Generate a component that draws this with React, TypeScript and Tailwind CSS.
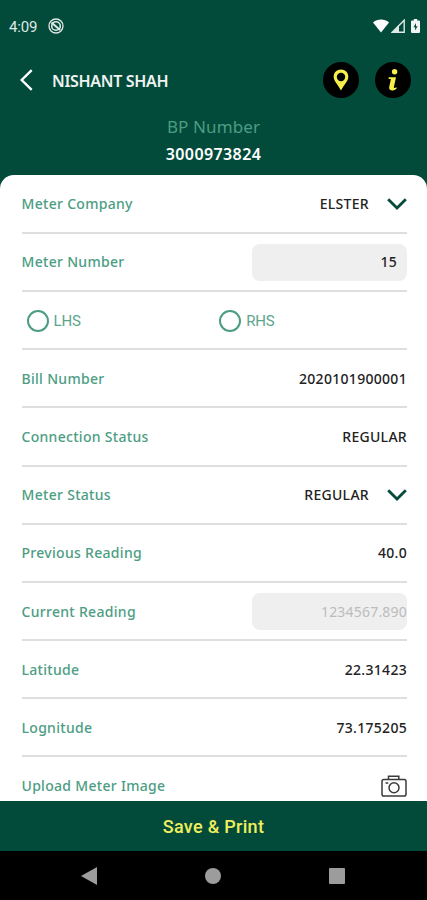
import type { ReactNode } from "react";

function StatusBar() {
  return (
    <div className="flex h-[52px] items-center justify-between pl-[9px] pr-[7px]">
      <div className="flex items-center gap-[11px] pt-px text-[#dfe8e4]">
        <span className="pt-px font-['Roboto',sans-serif] text-[15px] tracking-[-0.2px]">4:09</span>
        <svg viewBox="0 0 16 16" className="mb-px size-4" fill="none" stroke="currentColor">
          <circle cx="8" cy="8" r="7" strokeWidth="1.3" />
          <circle cx="8" cy="8" r="4.3" strokeWidth="1.6" />
          <path d="M3.5 4.5 12 12" strokeWidth="2" />
        </svg>
      </div>
      <div className="flex items-center text-white">
        <svg viewBox="0 0 16 14" className="h-[14px] w-4" fill="currentColor">
          <path d="M0 3.4C4.6-.4 11.4-.4 16 3.4L8 13.5Z" />
        </svg>
        <svg viewBox="0 0 14 14" className="ml-0.5 h-[14px] w-[14px]">
          <path d="M1.2 13.2 13.2 1.2V13.2Z" fill="none" stroke="#dfe8e4" strokeWidth="1.4" />
          <path d="M1 13.4 8 6.4V13.4Z" fill="#dfe8e4" />
        </svg>
        <svg viewBox="0 0 9 14" className="ml-1.5 h-[14px] w-[9px]">
          <path d="M2.8 0h3.4v1.5H8a1 1 0 0 1 1 1V13a1 1 0 0 1-1 1H1a1 1 0 0 1-1-1V2.5a1 1 0 0 1 1-1h1.8Z" fill="#f2f5f4" />
          <path d="M5 4 2.5 8.3h1.6v3.2l2.5-4.3H5Z" fill="#024b3a" />
        </svg>
      </div>
    </div>
  );
}

function Header() {
  return (
    <div className="flex h-14 items-center pl-5 pr-4">
      <svg viewBox="0 0 13 22" className="h-[22px] w-[13px]" fill="none" stroke="#fff" strokeWidth="2.4">
        <path d="M11.7 1.2 1.7 11l10 9.8" />
      </svg>
      <h1 className="ml-[19px] pt-px text-base font-semibold tracking-[-0.3px] text-[#eef3f1]">NISHANT SHAH</h1>
      <button type="button" aria-label="Location" className="ml-auto flex size-9 items-center justify-center rounded-full bg-black">
        <svg viewBox="0 0 16 22" className="h-[22px] w-4">
          <path
            d="M8 .5C3.8.5.7 3.6.7 7.7.7 12.3 5 15.5 8 21.5c3-6 7.3-9.2 7.3-13.8C15.3 3.6 12.2.5 8 .5Zm0 3.3a4.2 4.2 0 1 1 0 8.4 4.2 4.2 0 0 1 0-8.4Z"
            fill="#f5ef4b"
            fillRule="evenodd"
          />
        </svg>
      </button>
      <button type="button" aria-label="Info" className="ml-4 flex size-9 items-center justify-center rounded-full bg-black">
        <svg viewBox="0 0 10 22" className="h-[22px] w-[10px]" fill="#f5ef4b">
          <circle cx="6.6" cy="2.8" r="2.7" />
          <path d="M.7 8.2H8L6 17.6c-.2 1 0 1.5.6 1.5.6 0 1-.3 1.5-.8l.8.8C7.9 20.7 6.5 21.5 4.5 21.5c-2.6 0-3.7-1.4-3.3-3.4L2.9 10H.7Z" />
        </svg>
      </button>
    </div>
  );
}

function ChevronDown() {
  return (
    <svg viewBox="0 0 20 12" className="ml-[18px] h-3 w-5" fill="none" stroke="#064a3a" strokeWidth="2.8">
      <path d="M1.2 1.2 10 10l8.8-8.8" />
    </svg>
  );
}

function CameraIcon() {
  return (
    <svg viewBox="0 0 26 22" className="mb-px h-[22px] w-[26px]" fill="none" stroke="#3a3a3a" strokeWidth="1.5">
      <rect x="1" y="4.5" width="24" height="16.5" rx="1.8" />
      <path d="M7.5 4.5V1.2h10.3v3.3" />
      <circle cx="13" cy="12.7" r="5" />
      <path d="M4.5 8h2.8" />
    </svg>
  );
}

function Row({ label, children }: { label: string; children: ReactNode }) {
  return (
    <div className="flex h-[58.2px] shrink-0 items-center justify-between border-b-2 border-[#dedede] pt-px">
      <span className="text-sm font-medium tracking-[0.3px] text-[#4c9d83]">{label}</span>
      {children}
    </div>
  );
}

function Value({ children }: { children: ReactNode }) {
  return <span className="text-sm font-medium tracking-[0.3px] text-[#222]">{children}</span>;
}

function Radio({ label }: { label: string }) {
  return (
    <label className="flex w-[193px] items-center pl-[5px]">
      <span className="size-[22px] rounded-full border-2 border-[#4c9d83]" />
      <span className="ml-[5px] pt-px font-['Roboto',sans-serif] text-[15px] tracking-[-0.2px] text-[#5ba58d]">{label}</span>
    </label>
  );
}

export default function App() {
  return (
    <div className="flex h-[900px] w-full flex-col overflow-hidden bg-[#024b3a] font-['Noto_Sans','Open_Sans',sans-serif]">
      <StatusBar />
      <Header />
      <div className="flex h-[67px] shrink-0 flex-col items-center pt-[5px]">
        <p className="text-[17px] leading-[27px] tracking-[0.1px] text-[#4c9d83]">BP Number</p>
        <p className="pt-px text-base leading-[27px] font-semibold tracking-[0.4px] text-white">3000973824</p>
      </div>

      <main className="flex min-h-0 flex-1 flex-col overflow-hidden rounded-t-[14px] bg-white pt-[0.6px] pl-[21.5px] pr-5">
        <Row label="Meter Company">
          <div className="flex items-center">
            <Value>ELSTER</Value>
            <ChevronDown />
          </div>
        </Row>
        <Row label="Meter Number">
          <div className="flex h-[37px] w-[155px] items-center justify-end rounded-lg bg-[#efefef] pr-2.5">
            <Value>15</Value>
          </div>
        </Row>
        <div className="flex h-[58.2px] shrink-0 items-center border-b-2 border-[#dedede] pt-px">
          <Radio label="LHS" />
          <Radio label="RHS" />
        </div>
        <Row label="Bill Number">
          <Value>2020101900001</Value>
        </Row>
        <Row label="Connection Status">
          <Value>REGULAR</Value>
        </Row>
        <Row label="Meter Status">
          <div className="flex items-center">
            <Value>REGULAR</Value>
            <ChevronDown />
          </div>
        </Row>
        <Row label="Previous Reading">
          <Value>40.0</Value>
        </Row>
        <Row label="Current Reading">
          <div className="flex h-[37px] w-[155px] items-center justify-end rounded-lg bg-[#efefef]">
            <span className="text-sm tracking-[0.2px] text-[#bcbcbc]">1234567.890</span>
          </div>
        </Row>
        <Row label="Latitude">
          <Value>22.31423</Value>
        </Row>
        <Row label="Lognitude">
          <Value>73.175205</Value>
        </Row>
        <Row label="Upload Meter Image">
          <CameraIcon />
        </Row>
      </main>

      <button type="button" className="h-[50px] shrink-0 bg-[#024b3a] pt-0.5 font-['Roboto',sans-serif] text-lg font-medium tracking-[0.3px] text-[#f0ee5c]">
        Save &amp; Print
      </button>
      <nav className="flex h-[49px] shrink-0 items-center justify-between bg-black pl-[81px] pr-[82px]">
        <svg viewBox="0 0 16 18" className="h-[18px] w-4" fill="#9c9c9c">
          <path d="M16 0v18L0 9Z" />
        </svg>
        <span className="size-4 rounded-full bg-[#9c9c9c]" />
        <span className="size-4 rounded-[1px] bg-[#9c9c9c]" />
      </nav>
    </div>
  );
}
